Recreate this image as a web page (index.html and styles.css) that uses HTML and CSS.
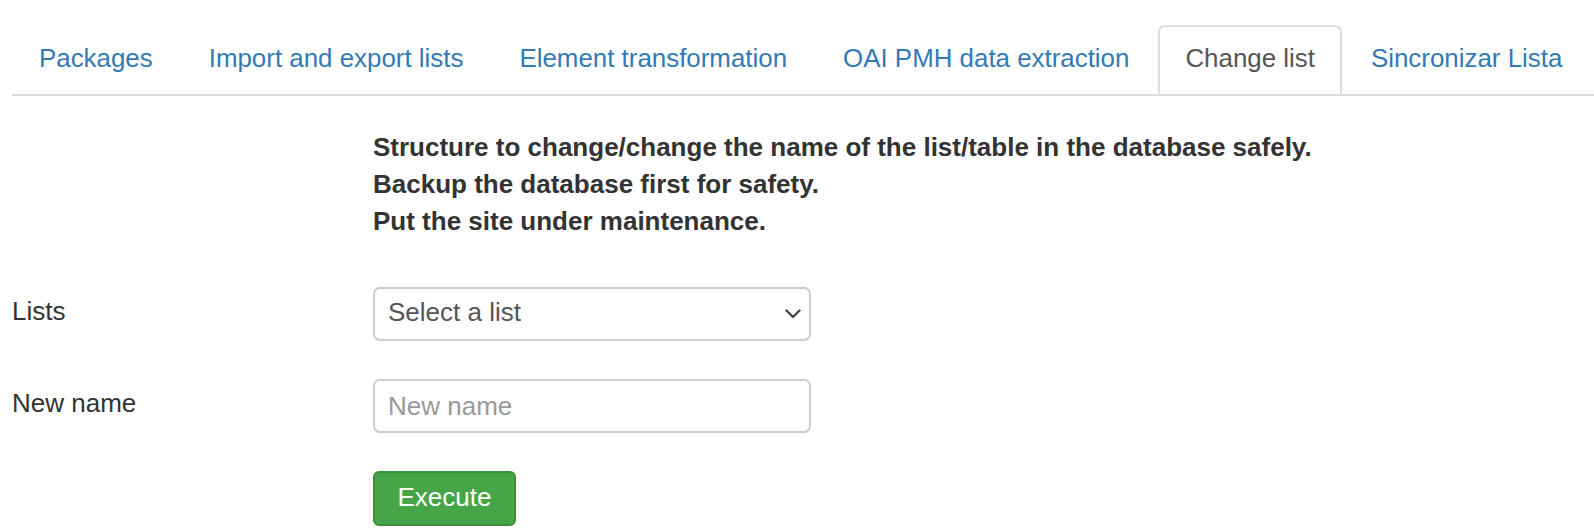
FILE: index.html
```html
<!DOCTYPE html>
<html lang="en">
<head>
<meta charset="utf-8">
<title>Change list</title>
<link rel="stylesheet" href="styles.css">
</head>
<body>
<div class="page">
  <ul class="tabs">
    <li class="tab"><a href="#">Packages</a></li>
    <li class="tab"><a href="#">Import and export lists</a></li>
    <li class="tab"><a href="#">Element transformation</a></li>
    <li class="tab"><a href="#">OAI PMH data extraction</a></li>
    <li class="tab active"><a href="#">Change list</a></li>
    <li class="tab"><a href="#">Sincronizar Lista</a></li>
  </ul>

  <div class="form">
    <div class="row intro-row">
      <div class="label"></div>
      <div class="intro">
        Structure to change/change the name of the list/table in the database safely.<br>
        Backup the database first for safety.<br>
        Put the site under maintenance.
      </div>
    </div>

    <div class="row field-row first-field">
      <label class="label" for="lists">Lists</label>
      <div class="control select-wrap">
        <select id="lists" class="select">
          <option>Select a list</option>
        </select>
        <svg class="chevron" width="16" height="10" viewBox="0 0 16 10" aria-hidden="true">
          <path d="M1.5 1.5 L8 8 L14.5 1.5" fill="none" stroke="#444" stroke-width="2.4" stroke-linecap="round" stroke-linejoin="round"/>
        </svg>
      </div>
    </div>

    <div class="row field-row">
      <label class="label" for="newname">New name</label>
      <div class="control">
        <input id="newname" class="input" type="text" placeholder="New name">
      </div>
    </div>

    <div class="row field-row">
      <div class="label"></div>
      <div class="control">
        <button class="btn-success" type="button">Execute</button>
      </div>
    </div>
  </div>
</div>
</body>
</html>
```

FILE: styles.css
```css
html, body {
  margin: 0;
  padding: 0;
  background: #fff;
  overflow: hidden;
}

body {
  font-family: "Liberation Sans", Arial, Helvetica, sans-serif;
  font-size: 26px;
  line-height: 37px;
  color: #333;
}

.page {
  padding: 25px 0 0 12px;
}

.tabs {
  list-style: none;
  margin: 0;
  padding: 0;
  display: flex;
  flex-wrap: nowrap;
  overflow: hidden;
  border-bottom: 2px solid #ddd;
}

.tab {
  flex: none;
  margin-bottom: -2px;
  margin-right: 2px;
  white-space: nowrap;
}

.tab a {
  display: block;
  padding: 13px 25px 18px 25px;
  border: 2px solid transparent;
  border-radius: 7px 7px 0 0;
  color: #337ab7;
  text-decoration: none;
  font-size: 25.9px;
  line-height: 36px;
}

.tab.active a {
  color: #555;
  background: #fff;
  border-color: #ddd;
  border-bottom-color: transparent;
}

.form {
  padding-top: 33px;
}

.row {
  display: grid;
  grid-template-columns: 361px 438px;
}

.intro-row {
  grid-template-columns: 361px 1fr;
}

.intro {
  font-weight: bold;
}

.field-row {
  margin-top: 38px;
  align-items: start;
}

.first-field {
  margin-top: 47px;
}

.label {
  padding-top: 6px;
  color: #333;
}

.control {
  display: block;
}

.select-wrap {
  position: relative;
}

.select,
.input {
  box-sizing: border-box;
  display: block;
  width: 438px;
  height: 54px;
  margin: 0;
  padding: 0 40px 0 13px;
  border: 2px solid #ccc;
  border-radius: 7px;
  background: #fff;
  font-family: inherit;
  font-size: 26px;
  color: #555;
  outline: none;
}

.select {
  appearance: none;
  -webkit-appearance: none;
  padding-bottom: 4px;
}

.input::placeholder {
  color: #999;
}

.chevron {
  position: absolute;
  right: 10px;
  top: 22px;
}

.btn-success {
  box-sizing: border-box;
  display: block;
  height: 55px;
  width: 143px;
  padding: 0 0 3px;
  border: 2px solid #3b8e3b;
  border-radius: 6px;
  background: #46a546;
  color: #fff;
  font-family: inherit;
  font-size: 26px;
  cursor: pointer;
}
```
